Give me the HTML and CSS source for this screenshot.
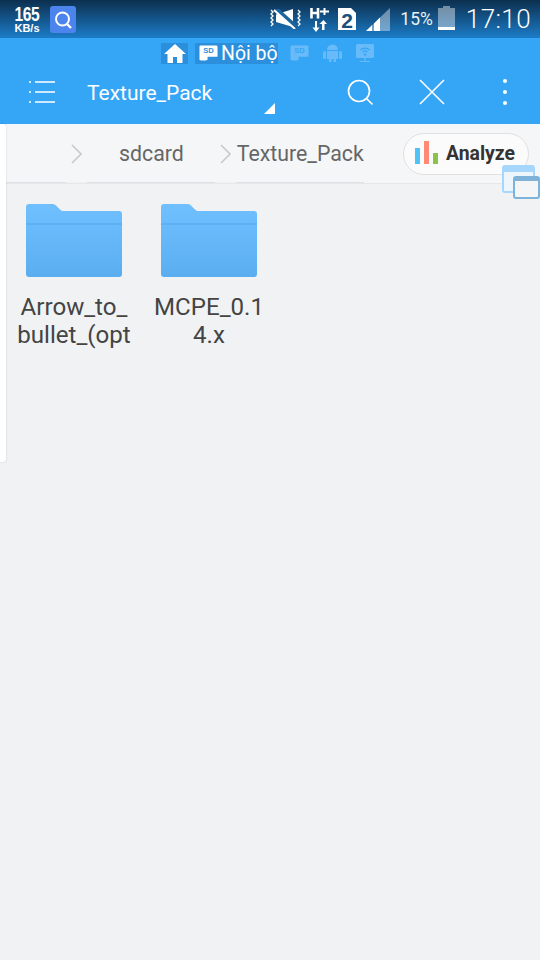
FILE: index.html
```html
<!DOCTYPE html>
<html lang="vi">
<head>
<meta charset="utf-8">
<title>Texture_Pack</title>
<link rel="stylesheet" href="styles.css">
</head>
<body>
<div class="screen">
  <div class="status">
    <div class="speed"><span class="speed-num">165</span><span class="speed-unit">KB/s</span></div>
    <div class="app-badge">
      <svg width="26" height="27" viewBox="0 0 26 27"><rect width="26" height="27" rx="3" fill="#4c84ee"/><circle cx="12.500" cy="13" r="6.500" fill="none" stroke="#fff" stroke-width="2"/><path d="M17 18l4 4" stroke="#fff" stroke-width="2.400"/></svg>
    </div>
    <div class="status-right">
      <svg class="ic-mute" width="32" height="20" viewBox="0 0 32 20"><path d="M1 1l2 2-2 2 2 2-2 2 2 2-2 2 2 2-2 2M28 1l2 2-2 2 2 2-2 2 2 2-2 2 2 2-2 2" fill="none" stroke="#fff" stroke-width="1.300"/><path d="M6 5.500L23 0v18L6 13z" fill="#fff"/><path d="M6 0l21 19" stroke="#1b659f" stroke-width="4.500"/><path d="M4 1l21 19" stroke="#fff" stroke-width="2"/></svg>
      <svg class="ic-net" width="19" height="25" viewBox="0 0 19 25"><path d="M1.500 1v10.500M8 1v10.500M1.500 6h6.500" stroke="#fff" stroke-width="2.600" fill="none"/><path d="M10 4.500h9M14.500 1v7" stroke="#fff" stroke-width="2" fill="none"/><path d="M5 14v6.500h-2.500L6 25l3.500-4.500H7V14zM12 23v-6H9.500L13.500 13l3.500 4h-2.500v6z" fill="#fff"/></svg>
      <svg class="ic-sim" width="18" height="22" viewBox="0 0 18 22"><path d="M0 0h13l5 5v17H0z" fill="#fff"/><text x="9" y="19.500" class="sim-num">2</text></svg>
      <svg class="ic-signal" width="24" height="23" viewBox="0 0 24 23"><path d="M0 23L24 0v23z" fill="#fff" fill-opacity=".4"/><path d="M0 23l6-5.700V23zM8 23v-7.600l6-5.800V23z" fill="#fff"/></svg>
      <span class="pct">15%</span>
      <svg class="ic-batt" width="17" height="24" viewBox="0 0 17 24"><path d="M5 0h7v2h5v22H0V2h5z" fill="#fff" fill-opacity=".42"/><rect y="21" width="17" height="3" fill="#fff"/></svg>
      <span class="clock">17:10</span>
    </div>
  </div>

  <header class="appbar">
    <div class="tabs">
      <span class="tab tab-on">
        <svg width="24" height="20" viewBox="0 0 24 20"><path d="M12 1L1 11h3.500v9H10v-6h4v6h5.500v-9H23z" fill="#fff"/></svg>
      </span>
      <span class="tab tab-on tab-label">
        <svg width="19" height="18" viewBox="0 0 20 18"><path d="M2 1h16a1.500 1.500 0 0 1 1.500 1.500V13H9v3l-2 1H2L.5 16V2.500A1.500 1.500 0 0 1 2 1z" fill="#fff"/><text x="10" y="8.500" class="sd sd-blue">SD</text></svg>
        <span>Nội bộ</span>
      </span>
      <span class="tab tab-dim">
        <svg width="19" height="18" viewBox="0 0 20 18"><path d="M2 1h16a1.500 1.500 0 0 1 1.500 1.500V13H9v3l-2 1H2L.5 16V2.500A1.500 1.500 0 0 1 2 1z" fill="#fff"/><text x="10" y="8.500" class="sd sd-dim">SD</text></svg>
      </span>
      <span class="tab tab-dim">
        <svg width="19" height="18" viewBox="0 0 19 18"><path d="M4 6a5.500 5.500 0 0 1 11 0z" fill="#fff"/><rect x="4" y="7" width="11" height="8" fill="#fff"/><rect x="0" y="7" width="3" height="8" rx="1.500" fill="#fff"/><rect x="16" y="7" width="3" height="8" rx="1.500" fill="#fff"/><rect x="6" y="15" width="2.500" height="3" fill="#fff"/><rect x="10.500" y="15" width="2.500" height="3" fill="#fff"/></svg>
      </span>
      <span class="tab tab-dim">
        <svg width="19" height="19" viewBox="0 0 19 19"><rect width="18" height="14" rx="1.500" fill="#fff"/><path d="M9 14v3M4 17.500h10" stroke="#fff" stroke-width="1.200"/><path d="M4.500 6a6.500 6.500 0 0 1 9 0M6.500 8a3.700 3.700 0 0 1 5 0" fill="none" stroke="#35a5f6" stroke-width="1.200"/><circle cx="9" cy="10.500" r="1.200" fill="#35a5f6"/></svg>
      </span>
    </div>
    <div class="toolbar">
      <button class="tool tool-menu" aria-label="Menu">
        <svg width="26" height="22" viewBox="0 0 26 22"><path d="M6 1h20M6 11h20M6 21h20" stroke="#fff" stroke-width="1.600"/><path d="M0 1h2M0 11h2M0 21h2" stroke="#fff" stroke-width="1.600"/></svg>
      </button>
      <div class="title">Texture_Pack</div>
      <span class="corner"></span>
      <button class="tool tool-search" aria-label="Search">
        <svg width="27" height="27" viewBox="0 0 27 27"><circle cx="12" cy="12" r="10.500" fill="none" stroke="#fff" stroke-width="1.700"/><path d="M19.500 19.500l6 6" stroke="#fff" stroke-width="1.700"/></svg>
      </button>
      <button class="tool tool-close" aria-label="Close">
        <svg width="26" height="26" viewBox="0 0 26 26"><path d="M1 1l24 24M25 1L1 25" stroke="#fff" stroke-width="1.600"/></svg>
      </button>
      <button class="tool tool-more" aria-label="More">
        <svg width="4" height="26" viewBox="0 0 4 26"><circle cx="2" cy="2" r="2" fill="#fff"/><circle cx="2" cy="13" r="2" fill="#fff"/><circle cx="2" cy="24" r="2" fill="#fff"/></svg>
      </button>
    </div>
  </header>

  <nav class="crumbs">
    <svg class="chev chev-1" width="11" height="20" viewBox="0 0 11 20"><path d="M1 1l9 9-9 9" fill="none" stroke="#c9cacc" stroke-width="1.700"/></svg>
    <span class="crumb crumb-sd">sdcard</span>
    <svg class="chev chev-2" width="11" height="20" viewBox="0 0 11 20"><path d="M1 1l9 9-9 9" fill="none" stroke="#c9cacc" stroke-width="1.700"/></svg>
    <span class="crumb crumb-tp">Texture_Pack</span>
    <span class="analyze">
      <svg width="24" height="24" viewBox="0 0 24 24"><rect x="0" y="7" width="5" height="16" fill="#4fc3f7"/><rect x="9" y="0" width="5" height="23" fill="#ff8a75"/><rect x="18" y="12" width="5" height="11" fill="#8bc34a"/></svg>
      <b>Analyze</b>
    </span>
  </nav>

  <main class="files">
    <div class="file">
      <svg width="96" height="73" viewBox="0 0 96 73"><use href="#folder"/><rect y="19" width="96" height="2" fill="#5db0f3"/></svg>
      <span class="name">Arrow_to_<br>bullet_(opt</span>
    </div>
    <div class="file">
      <svg width="96" height="73" viewBox="0 0 96 73"><use href="#folder"/><rect y="19" width="96" height="2" fill="#5db0f3"/></svg>
      <span class="name">MCPE_0.1<br>4.x</span>
    </div>
  </main>

  <aside class="drawer-edge"></aside>
  <div class="windows">
    <svg width="38" height="34" viewBox="0 0 38 34"><rect x="1" y="1" width="31" height="26" rx="2" fill="#eef6fd" stroke="#a6d6fb" stroke-width="2"/><rect x="1" y="1" width="31" height="6" fill="#a6d6fb"/><rect x="12" y="12" width="25" height="21" rx="2" fill="#f3f5f7" stroke="#7fb2d9" stroke-width="2"/><rect x="12" y="12" width="25" height="4" fill="#7fb2d9"/></svg>
  </div>

  <svg class="defs" width="0" height="0">
    <defs>
      <linearGradient id="fg" x1="0" y1="0" x2="0" y2="1"><stop offset="0" stop-color="#70c0ff"/><stop offset="1" stop-color="#5aaef0"/></linearGradient>
      <path id="folder" d="M3 0h23c2 0 3 .5 4.500 2L34 5.500C35 6.500 36.500 7 38 7h55a3 3 0 0 1 3 3v60a3 3 0 0 1-3 3H3a3 3 0 0 1-3-3V3a3 3 0 0 1 3-3z" fill="url(#fg)"/>
    </defs>
  </svg>
</div>
</body>
</html>
```

FILE: styles.css
```css
* { box-sizing: border-box; }
html, body { margin: 0; padding: 0; }
body { font-family: Roboto, "Noto Sans", sans-serif; background: #f0f1f3; }
.screen { position: relative; width: 540px; height: 960px; overflow: hidden; background: #f0f2f4; }
.defs { position: absolute; }
svg { display: block; flex: none; }

.status { height: 38px; display: flex; align-items: center; padding: 0 9px 0 13px; color: #fff; background: linear-gradient(#0c2f4e, #1c7cc8); }
.speed { display: flex; flex-direction: column; align-items: center; width: 28px; font-family: "Liberation Sans", sans-serif; font-weight: 700; }
.speed-num { font-size: 20px; line-height: 17px; transform: scaleX(.78); letter-spacing: -.5px; }
.speed-unit { font-size: 11px; line-height: 10px; }
.app-badge { margin-left: 9px; }
.status-right { margin-left: auto; display: flex; align-items: center; }
.ic-mute { margin-right: 8px; }
.ic-net { margin-right: 9px; }
.ic-sim { margin-right: 10px; }
.sim-num { font: 700 21px "Liberation Sans", sans-serif; fill: #1a4f7d; text-anchor: middle; }
.ic-signal { margin-right: 10px; }
.pct { font-size: 17.500px; margin-right: 5px; opacity: .92; }
.ic-batt { margin: -2px 11px 0 0; }
.clock { font-size: 26px; font-weight: 300; letter-spacing: .4px; }

.appbar { height: 86px; background: #35a5f6; display: flex; flex-direction: column; color: #fff; }
.tabs { display: flex; align-items: center; padding: 4px 0 0 161px; height: 26px; gap: 7px; }
.tab { display: flex; align-items: center; justify-content: center; height: 21px; }
.tab-on { background: #2b8fdc; width: 27px; }
.tab-label { width: auto; padding: 0 0 0 4px; font-size: 19.500px; gap: 3px; }
.tab-dim { opacity: .25; width: 19px; margin-left: 7px; }
.tab-label + .tab-dim { margin-left: 5px; }
.sd { font: 700 8px "Liberation Sans", sans-serif; text-anchor: middle; }
.sd-blue { fill: #2b8fdc; }
.sd-dim { fill: #35a5f6; }

.toolbar { flex: 1; display: flex; align-items: center; padding: 0 0 4px 29px; }
.tool { border: 0; background: none; padding: 0; display: flex; }
.title { font-size: 21px; margin: 1px 0 0 32px; width: 177px; }
.corner { align-self: flex-end; margin-bottom: 6px; width: 0; height: 0; border-style: solid; border-width: 0 0 11px 11px; border-color: transparent transparent #fff transparent; }
.tool-search { margin-left: 72px; }
.tool-close { margin-left: 45px; }
.tool-more { margin-left: 58px; }

.crumbs { height: 60px; background: #f5f6f8 linear-gradient(90deg, #e0e1e4 0 66px, #f0f1f3 66px 87px, #e0e1e4 87px 215px, #f0f1f3 215px 236px, #e0e1e4 236px 364px, transparent 364px) left bottom / 100% 1px no-repeat; border-bottom: 1px solid #e6e7e9; display: flex; align-items: center; padding: 0 11px 0 71px; font-size: 21.300px; color: #666; }
.crumb-sd { margin-left: 37px; }
.chev-2 { margin-left: 36px; }
.crumb-tp { margin-left: 6px; }
.analyze { margin-left: auto; width: 126px; height: 42px; border: 1px solid #e0e1e3; border-radius: 21px; background: #fbfbfc; display: flex; align-items: center; padding-left: 11px; gap: 7px; font-size: 19.400px; color: #333; }
.analyze svg { margin-top: -2px; }

.files { display: flex; padding: 20px 0 0 20px; gap: 27px; }
.file { width: 108px; display: flex; flex-direction: column; align-items: center; }
.name { margin-top: 16px; font-size: 24.100px; line-height: 28px; color: #444; text-align: center; white-space: nowrap; }

.drawer-edge { position: absolute; left: 0; top: 124px; width: 6px; height: 338px; background: #fff; border-radius: 0 3px 3px 0; box-shadow: 0 0 2px rgba(0,0,0,.18); }
.windows { position: absolute; left: 502px; top: 165px; }
```
